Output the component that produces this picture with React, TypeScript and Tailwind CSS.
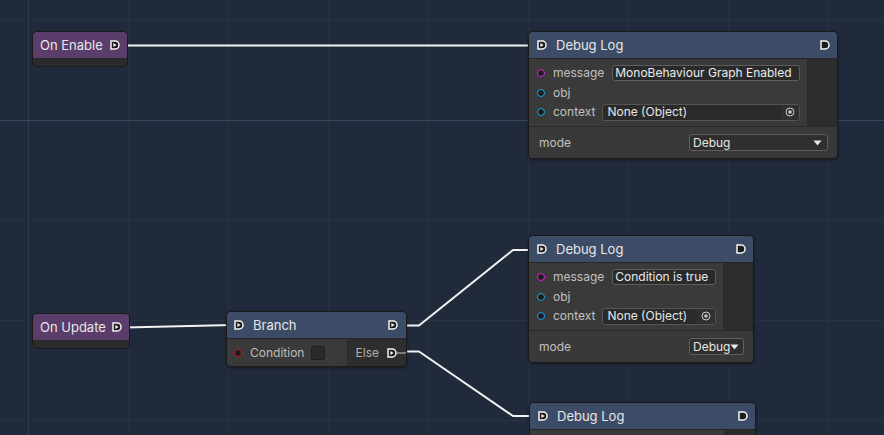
import React from 'react';

// Constants
type Point = [number, number];

const WIRES: Point[][] = [
  [[120, 45.5], [540, 45.5]],
  [[125, 327.5], [232, 325]],
  [[400, 325.5], [419, 325.5], [513, 250], [535, 250]],
  [[400, 351.5], [419, 351.5], [513, 416], [535, 416]],
];

const GRID_X = [28, 128, 228, 328, 428, 528, 628, 728, 828];
const GRID_Y = [20, 120, 220, 320, 420];

// Types
interface EventNodeProps {
  title: string;
  className: string;
}

interface InputRowProps {
  color: string;
  label: string;
  children: React.ReactNode;
}

interface DebugLogNodeProps {
  className: string;
  message: string;
  inputsClass: string;
  modeClass: string;
}

// Small drawings
const ExecPort: React.FC<{ connected?: boolean }> = ({ connected }) => (
  <svg width="10" height="10" viewBox="0 0 10 10" className="shrink-0">
    <path
      d="M1 1H5.2C7.4 1 9 2.8 9 5C9 7.2 7.4 9 5.2 9H1Z"
      fill="#1c1c1c"
      stroke="#f4f4f4"
      strokeWidth="1.5"
    />
    {connected && <path d="M3.4 3L6.6 5L3.4 7Z" fill="#f4f4f4" />}
  </svg>
);

const DataPort: React.FC<{ color: string }> = ({ color }) => (
  <span className={`h-[8px] w-[8px] shrink-0 rounded-full border-[1.5px] bg-[#1b1b1b] ${color}`} />
);

const PickerIcon: React.FC = () => (
  <svg width="10" height="10" viewBox="0 0 10 10">
    <circle cx="5" cy="5" r="4" fill="none" stroke="#c8c8c8" strokeWidth="1" />
    <circle cx="5" cy="5" r="1.8" fill="#c8c8c8" />
  </svg>
);

const DropArrow: React.FC = () => (
  <svg width="9" height="6" viewBox="0 0 9 6" className="shrink-0">
    <path d="M0.5 0.5H8.5L4.5 5.5Z" fill="#e6e6e6" />
  </svg>
);

// Components
const EventNode: React.FC<EventNodeProps> = ({ title, className }) => (
  <div className={`absolute flex flex-col overflow-hidden rounded-[5px] border border-[#1a1a1a] ${className}`}>
    <div className="flex h-[26px] shrink-0 items-center justify-between bg-[#5a3d6b] pl-[7px] pr-[7px]">
      <span className="text-[13px] leading-none text-[#e6e6e6]">{title}</span>
      <ExecPort connected />
    </div>
    <div className="flex-1 border-t border-[#262626] bg-[#2b2b2b]" />
  </div>
);

const InputRow: React.FC<InputRowProps> = ({ color, label, children }) => (
  <div className="flex h-[20px] items-center pl-[8px] pr-[7px]">
    <DataPort color={color} />
    <span className="ml-[8px] mr-[7px] text-[12px] leading-none text-[#c0c0c0]">{label}</span>
    {children}
  </div>
);

const DebugLogNode: React.FC<DebugLogNodeProps> = ({ className, message, inputsClass, modeClass }) => (
  <div className={`absolute flex flex-col overflow-hidden rounded-[5px] border border-[#1a1a1a] shadow-[0_1px_3px_rgba(0,0,0,0.4)] ${className}`}>
    <header className="flex h-[26px] shrink-0 items-center bg-[#3d4c66] pl-[8px] pr-[7px]">
      <ExecPort connected />
      <span className="ml-[9px] flex-1 text-[13px] leading-none text-[#e6e6e6]">Debug Log</span>
      <ExecPort />
    </header>
    <div className="flex h-[68px] shrink-0 border-t border-[#262626]">
      <div className={`flex flex-col bg-[#3a3a3a] py-[4px] ${inputsClass}`}>
        <InputRow color="border-[#e01ee0]" label="message">
          <div className="ml-[1px] flex h-[16px] flex-1 items-center rounded-[3px] border border-[#5e5e5e] bg-[#2a2a2a] pl-[2px]">
            <span className="whitespace-nowrap text-[12px] leading-none text-[#ececec]">{message}</span>
          </div>
        </InputRow>
        <InputRow color="border-[#1fa6e6]" label="obj">
          <span />
        </InputRow>
        <InputRow color="border-[#1fa6e6]" label="context">
          <div className="flex h-[17px] flex-1 items-stretch overflow-hidden rounded-[3px] border border-[#555555] bg-[#2a2a2a]">
            <span className="flex flex-1 items-center whitespace-nowrap px-[4px] text-[12px] leading-none text-[#e6e6e6]">None (Object)</span>
            <span className="flex w-[18px] items-center justify-center bg-[#303030]">
              <PickerIcon />
            </span>
          </div>
        </InputRow>
      </div>
      <div className="flex-1 border-l border-[#2a2a2a] bg-[#2c2c2d]" />
    </div>
    <div className="flex h-[32px] shrink-0 items-center justify-between border-t border-[#2a2a2a] bg-[#393939] pl-[10px] pr-[9px]">
      <span className="text-[12px] leading-none text-[#c0c0c0]">mode</span>
      <div className={`flex h-[17px] items-center justify-between rounded-[3px] border border-[#5e5e5e] bg-[#2f2f2f] pl-[3px] pr-[5px] ${modeClass}`}>
        <span className="text-[12px] leading-none text-[#e6e6e6]">Debug</span>
        <DropArrow />
      </div>
    </div>
  </div>
);

const BranchNode: React.FC = () => (
  <div className="absolute left-[226px] top-[311px] flex h-[56px] w-[181px] flex-col overflow-hidden rounded-[5px] border border-[#1a1a1a] shadow-[0_1px_3px_rgba(0,0,0,0.4)]">
    <header className="flex h-[26px] shrink-0 items-center bg-[#3d4c66] pl-[7px] pr-[8px]">
      <ExecPort connected />
      <span className="ml-[9px] flex-1 text-[13px] leading-none text-[#e6e6e6]">Branch</span>
      <ExecPort connected />
    </header>
    <div className="flex flex-1 border-t border-[#262626]">
      <div className="flex w-[120px] items-center bg-[#3a3a3a] pl-[7px]">
        <span className="h-[8px] w-[8px] shrink-0 rounded-full border-[1.5px] border-[#c41a1a] bg-[#1b1b1b]" />
        <span className="ml-[8px] text-[12px] leading-none text-[#bdbdbd]">Condition</span>
        <span className="ml-[7px] h-[14px] w-[14px] rounded-[2px] border border-[#1f1f1f] bg-[#2a2a2a]" />
      </div>
      <div className="flex flex-1 items-center justify-end border-l border-[#2a2a2a] bg-[#2e2e2e]">
        <span className="mr-[8px] text-[12px] leading-none text-[#b0b0b0]">Else</span>
        <ExecPort connected />
        <span className="h-[2px] w-[9px] bg-[#7a7a7a]" />
      </div>
    </div>
  </div>
);

const CanvasLayer: React.FC = () => (
  <svg width="884" height="435" className="absolute inset-0">
    {GRID_X.map((x) => (
      <line key={`x${x}`} x1={x + 0.5} y1={0} x2={x + 0.5} y2={435} stroke={x === 28 ? '#2f3a50' : '#28313f'} strokeWidth="1" />
    ))}
    {GRID_Y.map((y) => (
      <line key={`y${y}`} x1={0} y1={y + 0.5} x2={884} y2={y + 0.5} stroke={y === 120 ? '#3a4763' : '#28313f'} strokeWidth="1" />
    ))}
    {WIRES.map((pts, i) => (
      <polyline
        key={i}
        points={pts.map((p) => p.join(',')).join(' ')}
        fill="none"
        stroke="#f2f2f2"
        strokeWidth="2"
        strokeLinejoin="round"
      />
    ))}
  </svg>
);

export default function App() {
  return (
    <div className="relative h-[435px] w-[884px] overflow-hidden bg-[#212a3a] font-['Inter',sans-serif]">
      <CanvasLayer />
      <EventNode title="On Enable" className="left-[32px] top-[31px] h-[36px] w-[96px]" />
      <EventNode title="On Update" className="left-[32px] top-[313px] h-[36px] w-[98px]" />
      <BranchNode />
      <DebugLogNode
        className="left-[528px] top-[31px] w-[310px]"
        message="MonoBehaviour Graph Enabled"
        inputsClass="w-[278px]"
        modeClass="w-[139px]"
      />
      <DebugLogNode
        className="left-[528px] top-[235px] w-[226px]"
        message="Condition is true"
        inputsClass="w-[194px]"
        modeClass="w-[55px]"
      />
      <DebugLogNode
        className="left-[529px] top-[402px] w-[227px]"
        message="Condition is false"
        inputsClass="w-[194px]"
        modeClass="w-[55px]"
      />
    </div>
  );
}
